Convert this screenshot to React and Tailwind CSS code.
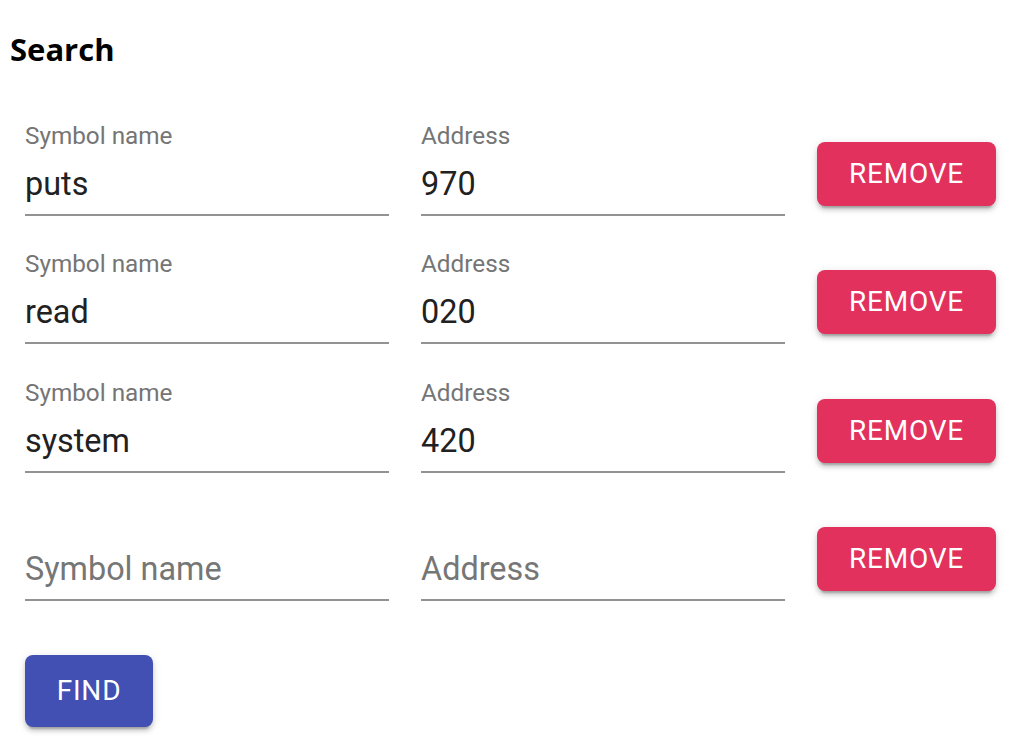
import React from "react";

const rows = [
  { name: "puts", addr: "970", gap: "mt-0" },
  { name: "read", addr: "020", gap: "mt-[34px]" },
  { name: "system", addr: "420", gap: "mt-[35px]" },
  { name: "", addr: "", gap: "mt-[34px]" },
];

function Field({ label, value }) {
  const filled = value !== "";
  return (
    <div className="w-[364px] flex flex-col">
      <div className="h-[28px] text-[24.3px] leading-[28px] text-[#757575]">
        {filled ? label : ""}
      </div>
      <div
        className={
          "mt-[15px] h-[38px] text-[32.4px] leading-[38px] " +
          (filled ? "text-[#212121]" : "text-[#767676]")
        }
      >
        {filled ? value : label}
      </div>
      <div className="mt-[11px] h-[2px] bg-[#929292]" />
    </div>
  );
}

export default function App() {
  return (
    <div
      className="bg-white w-[1018px] h-[742px] overflow-hidden"
      style={{ fontFamily: "Roboto, 'Liberation Sans', sans-serif" }}
    >
      <h3
        className="mt-[27px] ml-[10px] text-[31px] leading-[44px] font-bold text-black"
        style={{ fontFamily: "'Open Sans', 'Noto Sans', sans-serif" }}
      >
        Search
      </h3>
      <div className="mt-[51px] ml-[25px] flex flex-col">
        {rows.map((r, i) => (
          <div key={i} className={"flex items-start gap-[32px] " + r.gap}>
            <Field label="Symbol name" value={r.name} />
            <Field label="Address" value={r.addr} />
            <button className="mt-[20px] w-[179px] h-[64px] rounded-[8px] bg-[#e2315c] text-white text-[28px] font-normal tracking-[0.8px] shadow-[0_6px_2px_-4px_rgba(0,0,0,0.2),0_4px_4px_0_rgba(0,0,0,0.14),0_2px_10px_0_rgba(0,0,0,0.12)]">
              REMOVE
            </button>
          </div>
        ))}
      </div>
      <div className="ml-[25px] mt-[54px]">
        <button className="w-[128px] h-[72px] rounded-[8px] bg-[#4150b2] text-white text-[28px] font-normal tracking-[0.8px] shadow-[0_6px_2px_-4px_rgba(0,0,0,0.2),0_4px_4px_0_rgba(0,0,0,0.14),0_2px_10px_0_rgba(0,0,0,0.12)]">
          FIND
        </button>
      </div>
    </div>
  );
}
